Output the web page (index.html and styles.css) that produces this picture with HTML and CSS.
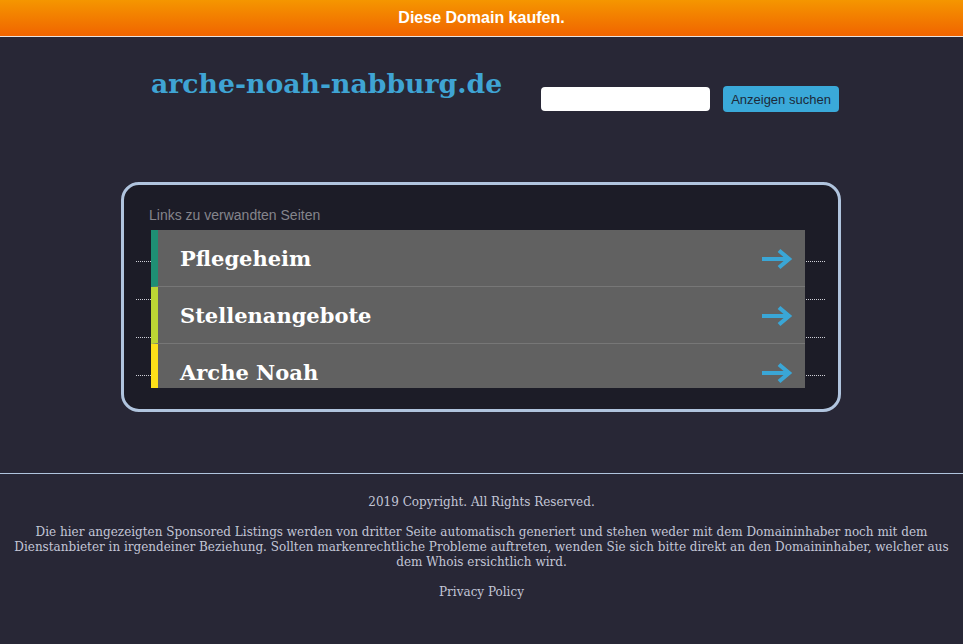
FILE: index.html
```html
<!DOCTYPE html>
<html lang="de">
<head>
<meta charset="utf-8">
<title>arche-noah-nabburg.de</title>
<link rel="stylesheet" href="styles.css">
</head>
<body>
<div class="topbar"><a href="#" class="buy">Diese Domain kaufen.</a></div>
<header class="header">
  <h1 class="title">arche-noah-nabburg.de</h1>
  <form class="search">
    <input class="search-input" type="text">
    <button class="search-btn" type="button">Anzeigen suchen</button>
  </form>
</header>
<section class="box">
  <div class="box-label">Links zu verwandten Seiten</div>
  <div class="links-wrap">
    <div class="dots">
      <div class="dot-line"></div>
      <div class="dot-line"></div>
      <div class="dot-line"></div>
      <div class="dot-line"></div>
    </div>
    <ul class="links">
      <li class="link c1"><span>Pflegeheim</span><svg class="arrow" viewBox="0 0 32 22" width="32" height="22"><path d="M1 11H28M18 2.5L28 11L18 19.5" fill="none" stroke="#3aa6d6" stroke-width="4.2" stroke-linejoin="miter"/></svg></li>
      <li class="link c2"><span>Stellenangebote</span><svg class="arrow" viewBox="0 0 32 22" width="32" height="22"><path d="M1 11H28M18 2.5L28 11L18 19.5" fill="none" stroke="#3aa6d6" stroke-width="4.2" stroke-linejoin="miter"/></svg></li>
      <li class="link c3"><span>Arche Noah</span><svg class="arrow" viewBox="0 0 32 22" width="32" height="22"><path d="M1 11H28M18 2.5L28 11L18 19.5" fill="none" stroke="#3aa6d6" stroke-width="4.2" stroke-linejoin="miter"/></svg></li>
    </ul>
  </div>
</section>
<div class="rule"></div>
<footer class="footer">
  <p class="copy">2019 Copyright. All Rights Reserved.</p>
  <p class="disclaimer">Die hier angezeigten Sponsored Listings werden von dritter Seite automatisch generiert und stehen weder mit dem Domaininhaber noch mit dem Dienstanbieter in irgendeiner Beziehung. Sollten markenrechtliche Probleme auftreten, wenden Sie sich bitte direkt an den Domaininhaber, welcher aus dem Whois ersichtlich wird.</p>
  <p class="privacy"><a href="#">Privacy Policy</a></p>
</footer>
</body>
</html>
```
FILE: styles.css
```css
html, body {
  margin: 0;
  padding: 0;
}
body {
  background: #282736;
  font-family: "DejaVu Serif", serif;
  width: 963px;
  height: 644px;
  overflow: hidden;
}
.topbar {
  height: 36px;
  background: linear-gradient(to bottom, #f59600 0%, #f06400 100%);
  border-bottom: 1px solid #e9e3df;
  display: flex;
  align-items: center;
  justify-content: center;
}
.buy {
  color: #ffffff;
  font-family: "Liberation Sans", Arial, sans-serif;
  font-weight: bold;
  font-size: 16px;
  text-decoration: none;
}
.header {
  height: 145px;
  box-sizing: border-box;
  display: flex;
  align-items: flex-start;
  padding-left: 151px;
}
.title {
  margin: 30px 0 0 0;
  font-size: 26.7px;
  line-height: 34px;
  font-weight: bold;
  color: #3fa4d4;
  width: 390px;
}
.search {
  margin: 49px 0 0 0;
  display: flex;
  align-items: center;
  gap: 13px;
}
.search-input {
  width: 169px;
  height: 24px;
  box-sizing: border-box;
  border: none;
  border-radius: 4px;
  background: #ffffff;
  margin: 0;
  padding: 0;
}
.search-btn {
  width: 116px;
  height: 26px;
  border: none;
  border-radius: 4px;
  background: #3aa9d9;
  color: #1c2a3a;
  font-family: "Liberation Sans", Arial, sans-serif;
  font-size: 13px;
  padding: 0;
  margin: 0;
}
.box {
  width: 720px;
  height: 230px;
  box-sizing: border-box;
  margin: 0 0 0 121px;
  border: 3px solid #b0c4de;
  border-radius: 18px;
  background: #1c1c27;
  padding: 22px 33px 21px 27px;
}
.box-label {
  font-family: "Liberation Sans", Arial, sans-serif;
  font-size: 14px;
  line-height: 16px;
  color: #85858c;
  margin: 0 0 7px -2px;
}
.links-wrap {
  display: grid;
  width: 689px;
  margin-left: -15px;
}
.dots, .links {
  grid-area: 1 / 1;
}
.dots {
  display: flex;
  flex-direction: column;
  gap: 37px;
  padding-top: 31px;
}
.dot-line {
  border-top: 1px dotted #cfd0d8;
  height: 0;
}
.links {
  list-style: none;
  margin: 0 0 0 15px;
  padding: 0;
  width: 654px;
  height: 158px;
  overflow: hidden;
}
.link {
  height: 56px;
  border-bottom: 1px solid #777777;
  background: #616161;
  border-left: 7px solid #1f8f74;
  display: flex;
  align-items: center;
  justify-content: space-between;
  padding: 0 12px 0 22px;
  color: #ffffff;
  font-weight: bold;
  font-size: 21px;
}
.link span {
  margin-top: 0;
}
.link.c2 { border-left-color: #bcd634; }
.link.c3 { border-left-color: #fde019; }
.arrow {
  display: block;
  margin-top: 2px;
}
.rule {
  margin-top: 61px;
  height: 1px;
  background: #b0c4de;
}
.footer {
  padding: 21px 8px 0 8px;
  text-align: center;
  color: #c3c6d6;
  font-size: 12px;
  line-height: 15px;
}
.footer p {
  margin: 0 0 15px 0;
}
.footer a {
  color: #c3c6d6;
  text-decoration: none;
}
```
